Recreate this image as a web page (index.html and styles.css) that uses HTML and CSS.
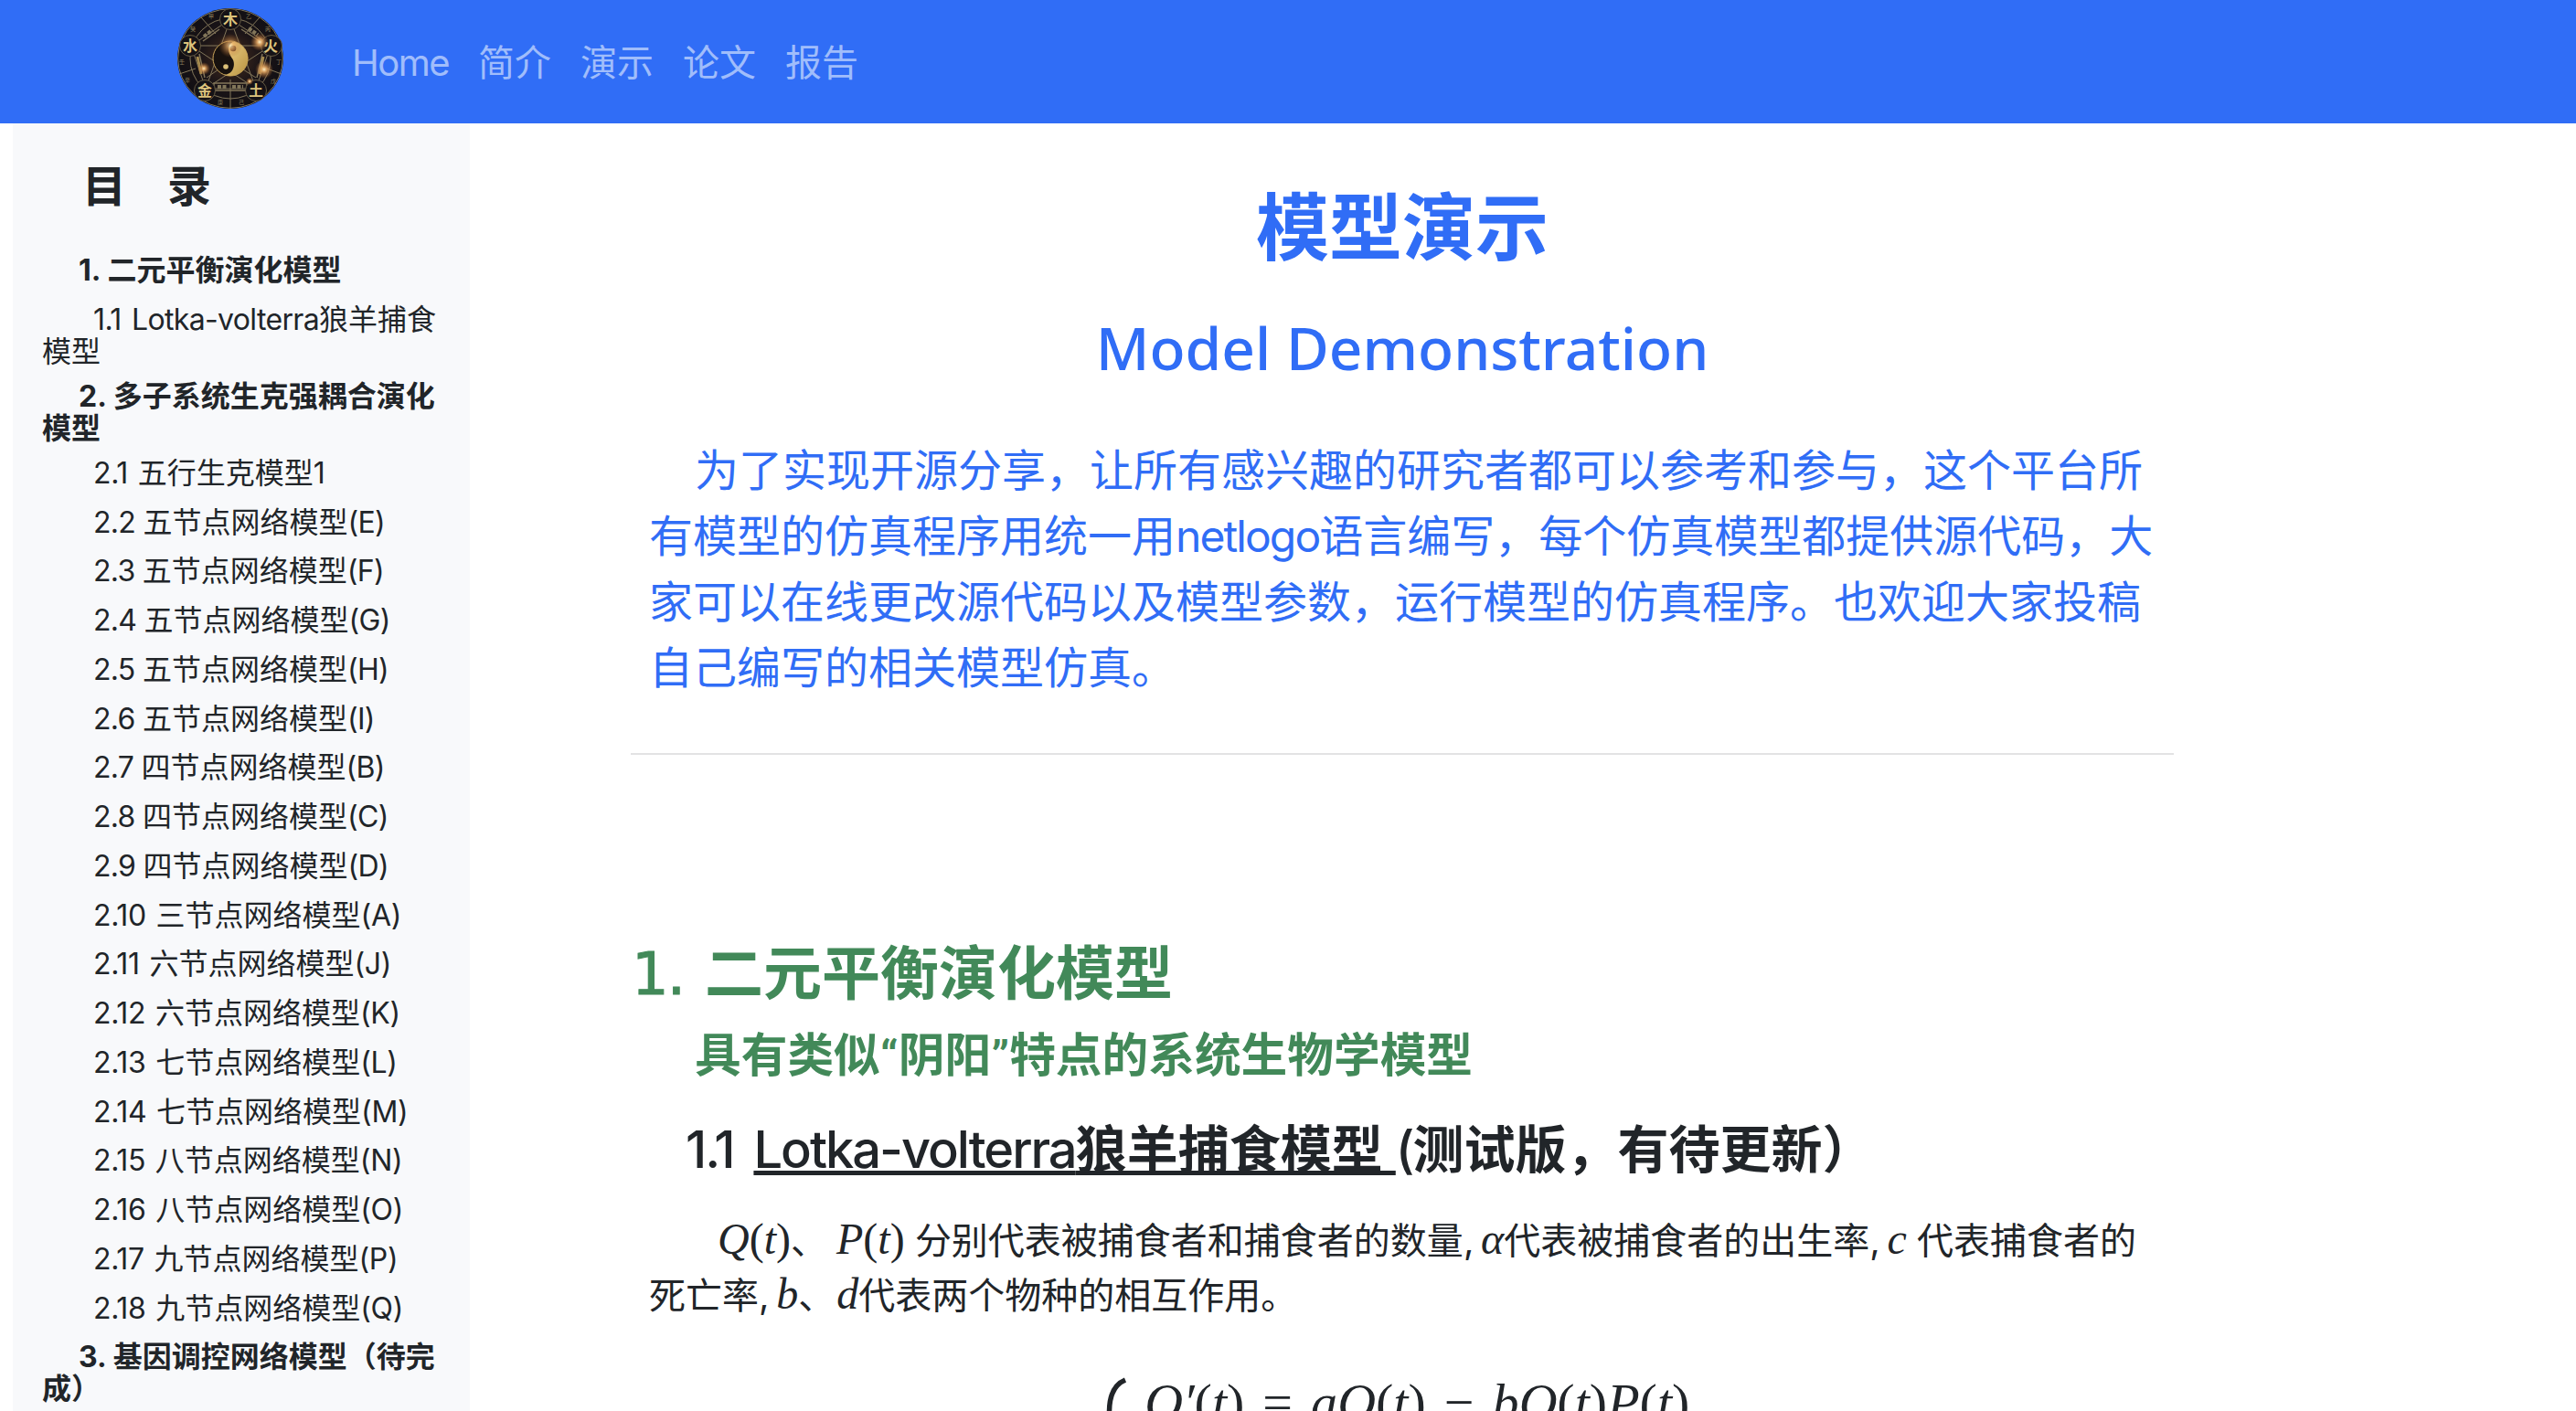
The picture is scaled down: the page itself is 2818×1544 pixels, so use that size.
FILE: index.html
```html
<!DOCTYPE html>
<html lang="zh-CN">
<head>
<meta charset="utf-8">
<title>模型演示</title>
<link rel="stylesheet" href="styles.css">
</head>
<body>
<header class="navbar">
  <svg class="logo" viewBox="0 0 116 110" preserveAspectRatio="none">
    <defs>
      <radialGradient id="base"><stop offset="0" stop-color="#4a3020"/><stop offset=".55" stop-color="#1c1517"/><stop offset="1" stop-color="#110f14"/></radialGradient>
      <radialGradient id="flare"><stop offset="0" stop-color="#fff3c8"/><stop offset=".3" stop-color="#eeae66" stop-opacity=".85"/><stop offset="1" stop-color="#a35d25" stop-opacity="0"/></radialGradient>
      <linearGradient id="gold" x1="0" y1="0" x2="1" y2="1"><stop offset="0" stop-color="#f0d58c"/><stop offset="1" stop-color="#b8913f"/></linearGradient>
    </defs>
    <ellipse cx="58" cy="55" rx="58" ry="55" fill="url(#base)"/>
    <g fill="none" stroke="#82765a" stroke-width="1">
      <ellipse cx="58" cy="55" rx="57.3" ry="54.3"/>
      <ellipse cx="58" cy="55" rx="44" ry="44"/>
      <path d="M58 12 15 41 31 88H86L102 41ZM58 12 31 88 102 41H15L86 88Z"/>
      <path d="M58 78V110M36 80 26 102M80 80 92 100M26 10 42 28M90 10 74 28M2 72 20 66M114 72 98 66M32 76 58 58 86 76M12 32 24 36M104 32 92 36"/>
      <path d="M46 23 28 36M70 23 90 36M24 50 30 76M93 50 87 76M40 82H76V90H40Z" stroke-width="1.4"/>
      <path d="M44 86H54M60 86H72M29 31 38 24M78 22 88 29" stroke-width="4" stroke-dasharray="4 1.5"/>
      <path d="M22 53 26 72M90 72 94 53" stroke="#a58a4e" stroke-width="3"/>
    </g>
    <g fill="#151216" stroke="#655a43">
      <circle cx="58" cy="12" r="11.5"/><circle cx="14" cy="41" r="11.5"/><circle cx="103" cy="41" r="11.5"/><circle cx="30" cy="90" r="11.5"/><circle cx="86" cy="90" r="11.5"/>
    </g>
    <g class="elements"><text x="58" y="18">木</text><text x="14" y="47">水</text><text x="102" y="47">火</text><text x="30" y="96">金</text><text x="86" y="96">土</text></g>
    <g class="stems"><text x="37" y="11">甲</text><text x="78" y="11">乙</text><text x="99" y="25">丙</text><text x="111" y="61">丁</text><text x="105" y="82">戊</text><text x="70" y="105">己</text><text x="47" y="105">庚</text><text x="11" y="81">辛</text><text x="5" y="61">壬</text><text x="17" y="25">癸</text></g>
    <g>
      <circle cx="58" cy="55" r="19" fill="#17110e" stroke="#c9a55a" stroke-width="1"/>
      <path d="M62 36.500A19 19 0 1 1 51 72.700C62 73 64 60 60 55C55 49 54 39 62 36.500Z" fill="url(#gold)"/>
      <circle cx="61" cy="44" r="3.300" fill="#4b2b18"/><circle cx="53" cy="64" r="2.800" fill="#dcc078"/>
    </g>
    <circle cx="58" cy="41" r="13" fill="url(#flare)" opacity=".8"/>
    <circle cx="90" cy="37" r="10" fill="url(#flare)"/>
    <circle cx="95" cy="67" r="10" fill="url(#flare)"/>
    <circle cx="29" cy="66" r="7" fill="url(#flare)"/>
    <circle cx="79" cy="80" r="4" fill="url(#flare)"/>
  </svg>
  <nav class="links"><a class="home">Home</a><a>简介</a><a>演示</a><a>论文</a><a>报告</a></nav>
</header>
<div class="layout">
  <aside class="toc">
    <h4 class="toc-title"><span>目</span><span>录</span></h4>
    <p class="chapter"><span class="num">1.</span>二元平衡演化模型</p>
    <p class="two lotka"><span class="en">1.1 Lotka-volterra</span>狼羊捕食<br>模型</p>
    <p class="chapter two"><span class="num">2.</span>多子系统生克强耦合演化<br>模型</p>
    <p class="teen"><span class="en">2.1 </span>五行生克模型<span class="en">1</span></p>
    <p><span class="en">2.2 </span>五节点网络模型<span class="en">(E)</span></p>
    <p><span class="en">2.3 </span>五节点网络模型<span class="en">(F)</span></p>
    <p><span class="en">2.4 </span>五节点网络模型<span class="en">(G)</span></p>
    <p><span class="en">2.5 </span>五节点网络模型<span class="en">(H)</span></p>
    <p><span class="en">2.6 </span>五节点网络模型<span class="en">(I)</span></p>
    <p><span class="en">2.7 </span>四节点网络模型<span class="en">(B)</span></p>
    <p><span class="en">2.8 </span>四节点网络模型<span class="en">(C)</span></p>
    <p><span class="en">2.9 </span>四节点网络模型<span class="en">(D)</span></p>
    <p class="teen"><span class="en">2.10 </span>三节点网络模型<span class="en">(A)</span></p>
    <p class="teen"><span class="en">2.11 </span>六节点网络模型<span class="en">(J)</span></p>
    <p class="teen"><span class="en">2.12 </span>六节点网络模型<span class="en">(K)</span></p>
    <p class="teen"><span class="en">2.13 </span>七节点网络模型<span class="en">(L)</span></p>
    <p class="teen"><span class="en">2.14 </span>七节点网络模型<span class="en">(M)</span></p>
    <p class="teen"><span class="en">2.15 </span>八节点网络模型<span class="en">(N)</span></p>
    <p class="teen"><span class="en">2.16 </span>八节点网络模型<span class="en">(O)</span></p>
    <p class="teen"><span class="en">2.17 </span>九节点网络模型<span class="en">(P)</span></p>
    <p class="teen"><span class="en">2.18 </span>九节点网络模型<span class="en">(Q)</span></p>
    <p class="chapter two"><span class="num">3.</span>基因调控网络模型（待完<br>成）</p>
  </aside>
  <main class="content">
    <h1>模型演示</h1>
    <h2 class="subtitle">Model Demonstration</h2>
    <p class="intro">为了实现开源分享，让所有感兴趣的研究者都可以参考和参与，这个平台所<br>有模型的仿真程序用统一用<span class="en">netlogo</span>语言编写，每个仿真模型都提供源代码，大<br>家可以在线更改源代码以及模型参数，运行模型的仿真程序。也欢迎大家投稿<br>自己编写的相关模型仿真。</p>
    <hr>
    <h2 class="section"><span class="num">1.</span>二元平衡演化模型</h2>
    <h3 class="tagline">具有类似<span class="quote">“</span>阴阳<span class="quote">”</span>特点的系统生物学模型</h3>
    <h3 class="model"><span class="en index">1.1 </span><u><span class="en">Lotka-volterra</span>狼羊捕食模型 </u><span class="en">(</span>测试版，有待更新）</h3>
    <p class="desc"><i>Q</i><b>(</b><i>t</i><b>)</b>、<i class="gap">P</i><b>(</b><i>t</i><b>)</b> 分别代表被捕食者和捕食者的数量<span class="en">, </span><i>α</i>代表被捕食者的出生率<span class="en">, </span><i>c</i> 代表捕食者的<br>死亡率<span class="en">, </span><i>b</i>、<i class="gap-sm">d</i>代表两个物种的相互作用。</p>
    <div class="formula">
      <svg class="brace" viewBox="0 0 24 160"><path d="M22 3C10 8 4.500 20 4.500 38V62C4.500 72 3 77 0 80C3 83 4.500 88 4.500 98V122C4.500 140 10 152 22 157" fill="none" stroke="#212529" stroke-width="5.500"/></svg>
      <div class="equation"><i>Q</i><i class="prime">′</i><b>(</b><i>t</i><b>)</b><b class="op">=</b><i>a</i><i>Q</i><b>(</b><i>t</i><b>)</b><b class="op minus">−</b><i>b</i><i>Q</i><b>(</b><i>t</i><b>)</b><i>P</i><b>(</b><i>t</i><b>)</b></div>
    </div>
  </main>
</div>
</body>
</html>
```
FILE: styles.css
```css
* { box-sizing: border-box; }
body {
  margin: 0;
  height: 1544px;
  overflow: hidden;
  background: #fff;
  color: #212529;
  font-family: Inter, "Noto Sans CJK SC", sans-serif;
}
h1, h2, h3, h4, p { margin: 0; white-space: nowrap; }

.navbar {
  display: flex;
  align-items: flex-start;
  height: 135px;
  padding: 9px 0 0 194px;
  background: #306df6;
}
.logo { width: 116px; height: 110px; }
.elements { fill: #ddc27c; font: 700 16px "Noto Sans CJK SC", sans-serif; text-anchor: middle; }
.stems { fill: #8d815f; font: 6px "Noto Sans CJK SC", sans-serif; text-anchor: middle; }
.links {
  display: flex;
  gap: 32px;
  margin: 30px 0 0 75px;
  font-size: 40px;
  line-height: 60px;
  color: #a0bdfb;
}
.home { letter-spacing: -1.5px; width: 106px; }

.layout { display: flex; height: 1409px; overflow: hidden; }
.toc {
  width: 500px;
  margin-left: 14px;
  padding: 41px 0 0 32px;
  background: #f8f9fb;
  font-size: 32px;
  line-height: 35px;
}
.toc-title { display: flex; gap: 45px; padding-left: 44px; font-size: 48px; line-height: 56px; font-weight: 700; margin-bottom: 46px; }
.toc p { text-indent: 56px; margin-bottom: 18.75px; }
.toc p.two { margin-bottom: 14px; }
.toc p.chapter { text-indent: 40px; font-weight: 700; }
.toc .num { margin-right: 7px; }
.en { letter-spacing: -0.022em; }
.teen .en { letter-spacing: -0.01em; word-spacing: 2px; }
.lotka .en { letter-spacing: -0.02em; word-spacing: 3px; }

.content { width: 1688px; margin-left: 176px; padding-top: 66px; }
h1 { font-size: 80px; line-height: 96px; text-align: center; color: #306df6; }
.subtitle {
  margin-top: 36px;
  font: 500 64px/96px "Noto Sans", sans-serif;
  text-align: center;
  color: #306df6;
}
.intro { margin-top: 50px; padding-left: 20px; text-indent: 50px; font-size: 48px; line-height: 72px; color: #306df6; }
.intro .en { letter-spacing: -0.04em; }
hr { height: 2px; margin: 57px 0 0; border: 0; background: #e3e3e4; }
.section { margin-top: 194px; padding-left: 1px; font-size: 64px; line-height: 90px; font-weight: 700; color: #428959; }
.section .num { display: inline-block; width: 80px; letter-spacing: -2px; font-family: "DejaVu Sans", sans-serif; font-weight: 400; -webkit-text-stroke: 1px currentColor; }
.tagline { margin-top: 12px; padding-left: 70px; font-size: 50.7px; line-height: 64px; color: #428959; }
.quote { display: inline-block; width: 20px; text-align: center; font-family: Roboto, sans-serif; font-size: 48px; line-height: 1; }
.model { margin-top: 33px; padding-left: 60px; font-size: 56px; line-height: 76px; font-weight: 600; }
.model .index { margin-right: 9px; }
.model .en { letter-spacing: -0.036em; font-weight: 500; }
.model u { text-decoration-thickness: 5px; text-underline-offset: 3px; text-decoration-skip-ink: none; }
.desc { margin-top: 32px; padding-left: 20px; text-indent: 75px; font-size: 40px; line-height: 60px; }
.desc .en { letter-spacing: -0.045em; }
.desc i, .desc b { font-family: "Liberation Serif", serif; font-size: 48px; font-weight: 400; line-height: 0; }
.desc .gap { margin-left: 10px; }
.desc .gap-sm { margin-left: 2px; }
.formula { display: flex; margin: 59px 0 0 519px; }
.brace { width: 24px; height: 160px; }
.equation { margin: -12px 0 0 19px; font: 58px/80px "Liberation Serif", serif; white-space: nowrap; }
.equation b { font-weight: 400; }
.equation .op { margin: 0 20px; }
```
